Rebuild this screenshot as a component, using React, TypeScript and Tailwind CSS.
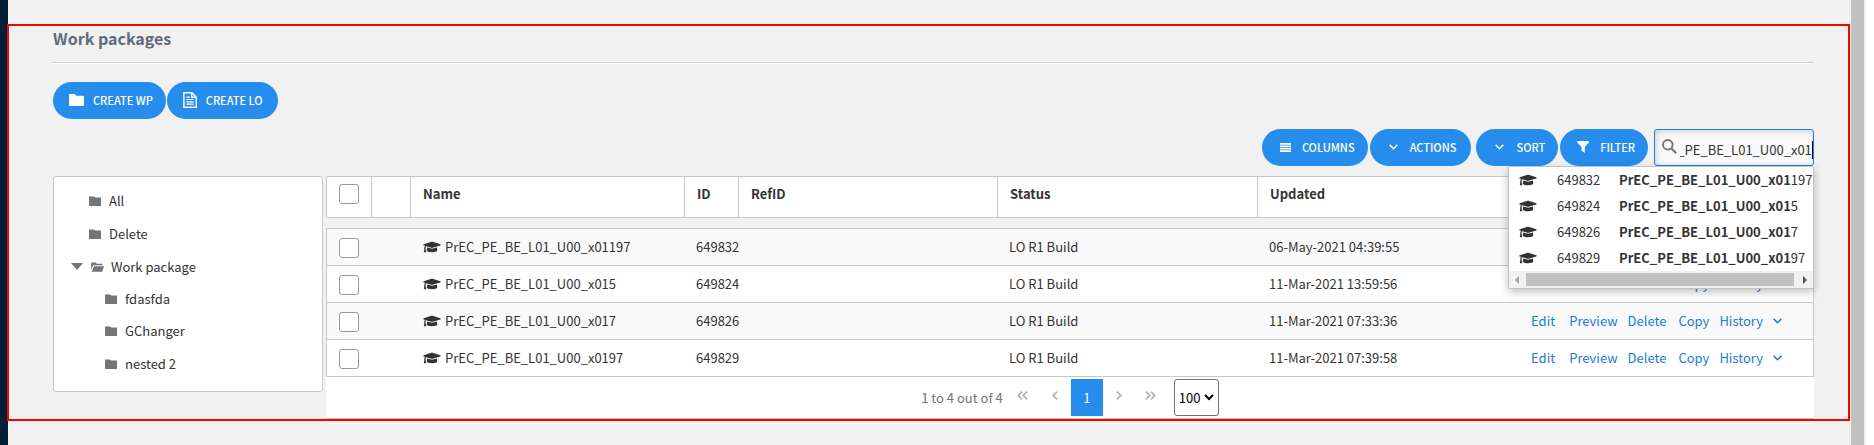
import { useEffect, useRef, useState, type ReactNode } from "react";
import { FaGraduationCap } from "react-icons/fa";

const QUERY = "PrEC_PE_BE_L01_U00_x01";

const packages = [
  { id: "649832", name: "PrEC_PE_BE_L01_U00_x01197", status: "LO R1 Build", updated: "06-May-2021 04:39:55" },
  { id: "649824", name: "PrEC_PE_BE_L01_U00_x015", status: "LO R1 Build", updated: "11-Mar-2021 13:59:56" },
  { id: "649826", name: "PrEC_PE_BE_L01_U00_x017", status: "LO R1 Build", updated: "11-Mar-2021 07:33:36" },
  { id: "649829", name: "PrEC_PE_BE_L01_U00_x0197", status: "LO R1 Build", updated: "11-Mar-2021 07:39:58" },
];

function Chevron({ className }: { className: string }) {
  return (
    <svg viewBox="0 0 9 6" className={className} fill="none" stroke="currentColor" aria-hidden="true">
      <path d="M.7.9l3.8 3.8L8.3.9" strokeWidth="1.5" />
    </svg>
  );
}

function FolderIcon({ className }: { className: string }) {
  return (
    <svg viewBox="0 0 15 12" className={className} fill="currentColor" aria-hidden="true">
      <path d="M1.2 0h4.6l1.4 1.7h6.6A1.2 1.2 0 0 1 15 2.9v7.9a1.2 1.2 0 0 1-1.2 1.2H1.2A1.2 1.2 0 0 1 0 10.8V1.2A1.2 1.2 0 0 1 1.2 0z" />
    </svg>
  );
}

function TreeFolder() {
  return (
    <svg viewBox="0 0 12 10" className="h-[10px] w-[12px] shrink-0 text-[#757575]" fill="currentColor" aria-hidden="true">
      <path d="M0 .5h5l1.2 1H12V10H0z" />
    </svg>
  );
}

function OpenFolder() {
  return (
    <svg viewBox="0 0 13 10" className="h-[10px] w-[13px] shrink-0 text-[#757575]" fill="currentColor" aria-hidden="true">
      <path d="M.2 7.8V.6h4.5l1.1 1.1h5.7v1.6H2.3z" />
      <path d="M3 4.3h10L11.2 9.8H.6z" />
    </svg>
  );
}

function DocumentIcon() {
  return (
    <svg viewBox="0 0 14 16" className="h-4 w-[14px]" fill="none" stroke="currentColor" aria-hidden="true">
      <path d="M.9.8h8l4.3 4.3v10.1H.9zM8.700.8v4.5h4.5" strokeWidth="1.4" />
      <path d="M3.3 7.5h7.4M3.3 9.8h7.4M3.3 12.2h7.4M3.3 5.2h3.5" strokeWidth="1.2" />
    </svg>
  );
}

function ColumnsIcon() {
  return (
    <svg viewBox="0 0 11 9" className="h-[9px] w-[11px]" fill="currentColor" aria-hidden="true">
      <path d="M0 0h11v1.7H0zM0 2.4h11v1.7H0zM0 4.8h11v1.7H0zM0 7.3h11V9H0z" />
    </svg>
  );
}

function FunnelIcon() {
  return (
    <svg viewBox="0 0 12 12" className="h-3 w-3" fill="currentColor" aria-hidden="true">
      <path d="M0 0h12v1.2L7.8 6v6L4.5 9.6V6L0 1.2z" />
    </svg>
  );
}

function SearchIcon() {
  return (
    <svg viewBox="0 0 15 15" className="mt-[9px] h-[15px] w-[15px] shrink-0 self-start text-[#757575]" fill="none" stroke="currentColor" aria-hidden="true">
      <circle cx="5.8" cy="5.8" r="4.8" strokeWidth="1.9" />
      <path d="M9.2 9.2l5 5" strokeWidth="2.2" />
    </svg>
  );
}

function PillButton({ icon, children, className }: { icon: ReactNode; children: ReactNode; className: string }) {
  return (
    <button type="button" className={`flex h-[37px] items-center rounded-full bg-[#278dec] pb-px text-[11px] font-medium text-white ${className}`}>
      {icon}
      <span>{children}</span>
    </button>
  );
}

function CheckBox({ label }: { label: string }) {
  return (
    <input
      type="checkbox"
      aria-label={label}
      className="block h-5 w-5 appearance-none rounded-[3px] border border-[#999] bg-white checked:bg-[#278dec]"
    />
  );
}

function TreeItem({ label, className }: { label: string; className: string }) {
  return (
    <li className={`flex items-center ${className}`}>
      <TreeFolder />
      <a href="#tree">{label}</a>
    </li>
  );
}

function SearchBox() {
  const [value, setValue] = useState(QUERY);
  const input = useRef<HTMLInputElement>(null);

  useEffect(() => {
    if (input.current) input.current.scrollLeft = input.current.scrollWidth;
  }, [value]);

  return (
    <div className="relative w-40">
      <div className="flex h-[37px] items-center rounded-[3px] border border-[#1b7cd6] bg-[#fafafa] pl-[7px] shadow-[inset_2px_2px_6px_rgba(0,0,0,0.15)]">
        <SearchIcon />
        <input
          ref={input}
          type="text"
          aria-label="Search work packages"
          value={value}
          onChange={(event) => setValue(event.target.value)}
          className="ml-[3px] h-full min-w-0 flex-1 bg-transparent pt-[3px] text-[13px] outline-none"
        />
        <span className="mt-1 h-[18px] w-px bg-black" />
      </div>
      <div className="absolute top-full right-0 z-10 w-[306px] rounded-[2px] border border-[#c4c4c4] bg-white shadow-[0_3px_8px_rgba(0,0,0,0.25)]">
        <ul>
          {packages.map((item) => (
            <li key={item.id} className="flex h-[26px] items-center whitespace-nowrap">
              <FaGraduationCap className="ml-[10px] h-[14px] w-[18px] shrink-0" />
              <span className="ml-5 w-[62px] shrink-0">{item.id}</span>
              <span>
                <b>{QUERY}</b>
                {item.name.slice(QUERY.length)}
              </span>
            </li>
          ))}
        </ul>
        <div className="flex h-[17px] items-center bg-[#f1f1f1]" aria-hidden="true">
          <svg viewBox="0 0 17 16" className="h-4 w-[17px]" fill="#a3a3a3">
            <path d="M10 4v8L6 8z" />
          </svg>
          <div className="h-[13px] flex-1 bg-[#c1c1c1]" />
          <svg viewBox="0 0 19 16" className="h-4 w-[19px]" fill="#505050">
            <path d="M9 4v8l4-4z" />
          </svg>
        </div>
      </div>
    </div>
  );
}

const headCell = "border-y border-r border-[#c8c8c8] bg-white pl-3 pb-[6px] text-left font-bold";

function PackageTable() {
  return (
    <table className="w-full table-fixed border-separate border-spacing-0">
      <colgroup>
        <col className="w-[46px]" />
        <col className="w-[39px]" />
        <col className="w-[274px]" />
        <col className="w-[54px]" />
        <col className="w-[259px]" />
        <col className="w-[260px]" />
        <col className="w-[260px]" />
        <col />
      </colgroup>
      <thead>
        <tr className="h-[42px]">
          <th className="rounded-tl-[2px] border border-[#c8c8c8] bg-white pb-[6px] pl-3">
            <CheckBox label="Select all" />
          </th>
          <th className={headCell} aria-label="Flags" />
          <th className={headCell}>Name</th>
          <th className={headCell}>ID</th>
          <th className={headCell}>RefID</th>
          <th className={headCell}>Status</th>
          <th className={headCell}>Updated</th>
          <th className={headCell} aria-label="Row actions" />
        </tr>
      </thead>
      <tbody>
        <tr className="h-[10px]">
          <td colSpan={8} className="bg-[#f1f1f1]" />
        </tr>
        {packages.map((item, index) => (
          <tr
            key={item.id}
            className={`[&>td]:border-b [&>td]:border-[#c8c8c8] ${index === 0 ? "h-[38px] [&>td]:border-t" : "h-[37px]"} ${index % 2 === 0 ? "bg-[#f9f9f9]" : "bg-white"}`}
          >
            <td className="border-l pt-px pl-3">
              <CheckBox label={`Select ${item.name}`} />
            </td>
            <td />
            <td className="pl-3">
              <div className="flex items-center gap-1">
                <FaGraduationCap className="h-[14px] w-[18px] shrink-0" />
                {item.name}
              </div>
            </td>
            <td className="pl-[11px]">{item.id}</td>
            <td />
            <td className="pl-[11px]">{item.status}</td>
            <td className="pl-[11px]">{item.updated}</td>
            <td className="border-r pr-[31px]">
              <div className="flex items-center justify-end gap-[10px] text-[#1b7cd6]">
                <a href="#edit" className="mr-1">Edit</a>
                <a href="#preview">Preview</a>
                <a href="#delete" className="mr-[2px]">Delete</a>
                <a href="#copy">Copy</a>
                <a href="#history">History</a>
                <button type="button" aria-label="More actions">
                  <Chevron className="h-[6px] w-[9px]" />
                </button>
              </div>
            </td>
          </tr>
        ))}
      </tbody>
    </table>
  );
}

function PagerArrow({ label, d }: { label: string; d: string }) {
  return (
    <button type="button" aria-label={label} className="flex h-[37px] w-8 justify-center pt-3 text-[#b5b5b5]">
      <svg viewBox="0 0 11 9" className="h-[9px] w-[11px]" fill="none" stroke="currentColor" strokeWidth="1.8">
        <path d={d} />
      </svg>
    </button>
  );
}

function Pager() {
  return (
    <div className="flex h-[42px] justify-center border-b border-[#c8c8c8] bg-white pt-[2px]">
      <p className="mr-1 h-[37px] leading-[37px] text-[#757575]">1 to 4 out of 4</p>
      <PagerArrow label="First page" d="M5 .7L1.2 4.5 5 8.3M10 .7L6.2 4.5 10 8.3" />
      <PagerArrow label="Previous page" d="M8 .7L4.2 4.5 8 8.3" />
      <button type="button" className="h-[37px] w-8 bg-[#278dec] text-white">1</button>
      <PagerArrow label="Next page" d="M4 .7l3.8 3.8L4 8.3" />
      <PagerArrow label="Last page" d="M1 .7l3.8 3.8L1 8.3M6 .7l3.8 3.8L6 8.3" />
      <div className="relative ml-[7px]">
        <select aria-label="Rows per page" defaultValue="100" className="h-[37px] w-[45px] appearance-none rounded-[3px] border border-[#707070] bg-white pl-1 text-black">
          <option>100</option>
        </select>
        <svg viewBox="0 0 10 7" className="pointer-events-none absolute top-[15px] right-[5px] h-[7px] w-[10px]" fill="none" stroke="black" strokeWidth="2">
          <path d="M1 1l4 4 4-4" />
        </svg>
      </div>
    </div>
  );
}

export default function App() {
  return (
    <div className="flex min-h-screen bg-[#f1f1f1] font-['Noto_Sans_CJK_SC','Source_Sans_Pro',sans-serif] text-[13px] leading-5 text-[#333]">
      <div className="w-2 shrink-0 bg-[#001f36]" />
      <main className="min-w-0 flex-1 pt-6">
        <section className="-ml-px border-2 border-[#f00] pr-[34px] pl-11">
          <h1 className="border-b border-[#ccc] pt-[2px] pb-[13px] text-[16px] leading-[21px] font-bold text-[#5f6b7d] shadow-[0_1px_0_#fff]">
            Work packages
          </h1>
          <div className="mt-[19px] flex gap-px">
            <PillButton className="gap-[9px] pr-[13px] pl-4" icon={<FolderIcon className="h-3 w-[15px]" />}>CREATE WP</PillButton>
            <PillButton className="gap-[9px] pr-[15px] pl-4" icon={<DocumentIcon />}>CREATE LO</PillButton>
          </div>
          <div className="mt-[10px] flex justify-end">
            <PillButton className="gap-[11px] pr-[13px] pl-[18px]" icon={<ColumnsIcon />}>COLUMNS</PillButton>
            <PillButton className="ml-[2px] gap-3 pr-[15px] pl-[19px]" icon={<Chevron className="h-[6px] w-[9px]" />}>ACTIONS</PillButton>
            <PillButton className="ml-[5px] gap-3 pr-[13px] pl-[19px]" icon={<Chevron className="h-[6px] w-[9px]" />}>SORT</PillButton>
            <PillButton className="mr-[6px] ml-[2px] gap-[11px] pr-[13px] pl-[17px]" icon={<FunnelIcon />}>FILTER</PillButton>
            <SearchBox />
          </div>
          <div className="mt-[10px] flex items-start gap-[3px]">
            <nav aria-label="Folders" className="w-[270px] shrink-0 rounded-[3px] border border-[#c8c8c8] bg-white pt-[7px] pb-[11px]">
              <ul>
                <TreeItem label="All" className="h-[33px] gap-2 pl-[35px]" />
                <TreeItem label="Delete" className="h-[33px] gap-2 pl-[35px]" />
                <li>
                  <div className="flex h-[33px] items-center pl-[17px]">
                    <svg viewBox="0 0 12 7" className="mr-2 h-[7px] w-3 text-[#757575]" fill="currentColor" aria-hidden="true">
                      <path d="M0 0h12L6 7z" />
                    </svg>
                    <OpenFolder />
                    <a href="#tree" className="ml-[7px]">Work package</a>
                  </div>
                  <ul>
                    <TreeItem label="fdasfda" className="h-[31px] gap-2 pl-[51px]" />
                    <TreeItem label="GChanger" className="h-[33px] gap-2 pl-[51px]" />
                    <TreeItem label="nested 2" className="h-[33px] gap-2 pl-[51px]" />
                  </ul>
                </li>
              </ul>
            </nav>
            <div className="min-w-0 flex-1">
              <PackageTable />
              <Pager />
            </div>
          </div>
        </section>
      </main>
      <div className="flex w-6 shrink-0" aria-hidden="true">
        <div className="ml-px w-[13px] bg-[#c1c1c1]" />
        <div className="ml-[2px] flex-1 bg-white" />
      </div>
    </div>
  );
}
